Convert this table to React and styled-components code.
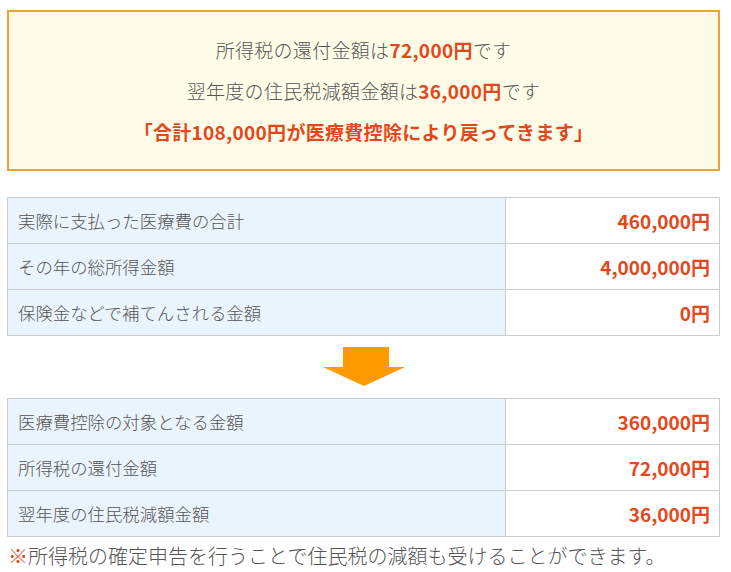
import React from "react";
import styled, { createGlobalStyle } from "styled-components";

const GlobalStyle = createGlobalStyle`
  body {
    margin: 0;
    background: #fff;
    font-family: "Noto Sans CJK JP", "Noto Sans", sans-serif;
    font-weight: 300;
    color: #555;
  }
`;

const Page = styled.div`
  padding: 10px 0 0 7px;
  width: 713px;
`;

const ResultBox = styled.div`
  border: 2px solid #e9a431;
  background: #fffde8;
  padding: 17px 0;
  text-align: center;
  font-size: 19px;
`;

const Line = styled.p`
  margin: 0;
  line-height: 41px;
  letter-spacing: 0.3px;
  color: ${(p) => (p.$accent ? "#e2481c" : "#555")};
  font-weight: ${(p) => (p.$accent ? 700 : 300)};
`;

const Red = styled.span`
  color: #e2481c;
  font-weight: 700;
`;

const Table = styled.table`
  width: 100%;
  border-collapse: collapse;
  margin-top: ${(p) => p.$top || 0}px;
`;

const Label = styled.td`
  background: #eaf4fd;
  border: 1px solid #ccc;
  height: 45px;
  padding: 0 10px;
  font-size: 17.4px;
  width: 477px;
`;

const Value = styled.td`
  border: 1px solid #ccc;
  padding: 0 9px;
  text-align: right;
  color: #e2481c;
  font-weight: 700;
  font-size: 19px;
`;

const ArrowWrap = styled.div`
  display: flex;
  justify-content: center;
  padding: 11px 0 12px;

  svg {
    display: block;
  }
`;

const Note = styled.p`
  margin: 4px 0 0 1px;
  font-size: 20px;
  line-height: 30px;
`;

const Mark = styled.span`
  color: #e2481c;
`;

const first = [
  ["実際に支払った医療費の合計", "460,000円"],
  ["その年の総所得金額", "4,000,000円"],
  ["保険金などで補てんされる金額", "0円"],
];

const second = [
  ["医療費控除の対象となる金額", "360,000円"],
  ["所得税の還付金額", "72,000円"],
  ["翌年度の住民税減額金額", "36,000円"],
];

const Rows = ({ rows, top }) => (
  <Table $top={top}>
    <tbody>
      {rows.map(([label, value]) => (
        <tr key={label}>
          <Label>{label}</Label>
          <Value>{value}</Value>
        </tr>
      ))}
    </tbody>
  </Table>
);

export default function App() {
  return (
    <>
      <GlobalStyle />
      <Page>
        <ResultBox>
          <Line>
            所得税の還付金額は<Red>72,000円</Red>です
          </Line>
          <Line>
            翌年度の住民税減額金額は<Red>36,000円</Red>です
          </Line>
          <Line $accent>「合計108,000円が医療費控除により戻ってきます」</Line>
        </ResultBox>
        <Rows rows={first} top={26} />
        <ArrowWrap>
          <svg width="82" height="39" viewBox="0 0 82 39">
            <polygon points="20,0 66,0 66,20 82,20 41,39 0,20 20,20" fill="#fe9a00" />
          </svg>
        </ArrowWrap>
        <Rows rows={second} />
        <Note>
          <Mark>※</Mark>所得税の確定申告を行うことで住民税の減額も受けることができます。
        </Note>
      </Page>
    </>
  );
}
